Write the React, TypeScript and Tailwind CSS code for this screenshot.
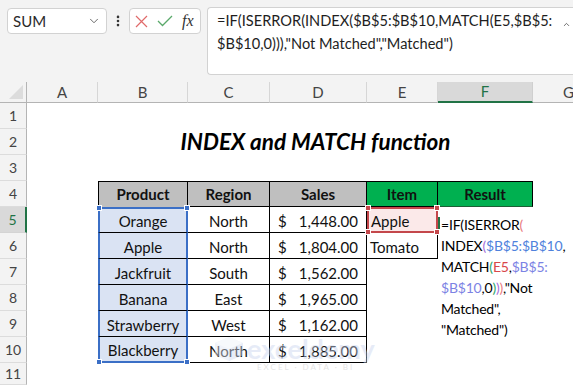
import { ChevronDown, ChevronUp, EllipsisVertical } from 'lucide-react';

const products = [
  ['Orange', 'North', '1,448.00'],
  ['Apple', 'North', '1,804.00'],
  ['Jackfruit', 'South', '1,562.00'],
  ['Banana', 'East', '1,965.00'],
  ['Strawberry', 'West', '1,162.00'],
  ['Blackberry', 'North', '1,885.00'],
];

const letters = ['A', 'B', 'C', 'D', 'E', 'F', 'G'];

function RowHead({ n, active }: { n: number; active?: boolean }) {
  return active ? (
    <div className="flex items-center justify-center bg-[#d9d9d9] border-r-2 border-r-[#217346] border-b border-b-[#d4d4d4] text-[14px] text-[#217346]">
      {n}
    </div>
  ) : (
    <div className="flex items-center justify-center bg-[#f3f3f3] border-r border-r-[#b4b4b4] border-b border-b-[#dcdcdc] text-[14px] text-[#444]">
      {n}
    </div>
  );
}

function Empty() {
  return <div className="bg-white" />;
}

function Handle({ pos, color }: { pos: string; color: string }) {
  return <div className={`absolute w-[6px] h-[6px] border border-white ${color} ${pos}`} />;
}

export default function App() {
  return (
    <div className="w-[573px] h-[385px] overflow-hidden bg-[#f3f3f3] relative font-[family-name:Lato,sans-serif] text-[#111]">
      {/* formula bar */}
      <div className="flex items-start h-[82px] pt-[7px] pl-[7px]">
        <div className="w-[100px] h-[26px] mt-[1px] bg-white border border-[#d2d2d2] rounded-[4px] flex items-center justify-between pl-[5px] pr-[5px]">
          <span className="text-[15px] text-[#2a2a2a]">SUM</span>
          <ChevronDown className="w-[14px] h-[14px] text-[#555]" strokeWidth={1.5} />
        </div>
        <div className="w-[22px] h-[26px] flex items-center justify-center mt-[1px]">
          <EllipsisVertical className="w-[14px] h-[14px] text-[#333]" strokeWidth={2.5} />
        </div>
        <div className="w-[72px] h-[26px] mt-[1px] bg-white border border-[#d2d2d2] rounded-[4px] flex items-center pl-[5px] gap-[9px]">
          <svg width="13" height="13" viewBox="0 0 13 13">
            <path d="M1 1 L12 12 M12 1 L1 12" stroke="#e06a6a" strokeWidth="1.2" fill="none" />
          </svg>
          <svg width="16" height="12" viewBox="0 0 16 12">
            <path d="M1 6 L5.5 10.5 L15 1" stroke="#5aa96a" strokeWidth="1.3" fill="none" />
          </svg>
          <span className="font-[family-name:'Liberation_Serif',serif] italic text-[16px] text-[#333] leading-none">fx</span>
        </div>
        <div className="flex-1 ml-[6px] h-[68px] bg-white border border-r-0 border-[#d2d2d2] rounded-l-[4px] relative pl-[9px] pt-[1px] text-[14.6px] leading-[23px] text-[#1e1e1e] whitespace-nowrap">
          =IF(ISERROR(INDEX($B$5:$B$10,MATCH(E5,$B$5:
          <br />
          $B$10,0))),"Not Matched","Matched")
          <ChevronUp className="absolute right-[2px] top-[12px] w-[9px] h-[9px] text-[#444]" strokeWidth={2} />
        </div>
      </div>

      {/* sheet */}
      <div className="relative grid grid-cols-[27px_71px_90px_82px_97px_71px_95px_40px] grid-rows-[21px_repeat(10,26px)_22px] bg-white">
        {/* title spans B:F */}
        <div className="col-start-3 col-span-5 row-start-3 flex items-center justify-center font-bold italic text-[22.5px] text-black">
          INDEX and MATCH function
        </div>

        {/* formula text overflowing from F5 */}
        <div className="col-start-7 row-start-6 row-span-6 relative pl-[3px] pt-[7px] text-[14px] tracking-[-0.2px] leading-[21px] whitespace-nowrap text-black">
          <div className="absolute left-0 top-[10px] w-[2px] h-[16px] bg-[#217346]" />
          <div>
            =IF(ISERROR<span className="text-[#ea7b82]">(</span>
          </div>
          <div>
            INDEX<span className="text-[#a66fd9]">(</span>
            <span className="text-[#4f82dc]">$B$5:$B$10</span>,
          </div>
          <div>
            MATCH<span className="text-[#2fa56a]">(</span>
            <span className="text-[#d8474a]">E5</span>,<span className="text-[#7c83e4]">$B$5:</span>
          </div>
          <div>
            <span className="text-[#7c83e4]">$B$10</span>,0<span className="text-[#2fa56a]">)</span>
            <span className="text-[#a66fd9]">)</span>
            <span className="text-[#ea7b82]">)</span>,"Not
          </div>
          <div>Matched",</div>
          <div>"Matched")</div>
        </div>

        {/* column headers */}
        <div className="bg-[#f3f3f3] border-r border-r-[#b4b4b4] border-b border-b-[#b4b4b4] flex items-end justify-end p-[3px]">
          <svg width="14" height="14" viewBox="0 0 14 14">
            <path d="M14 0 L14 14 L0 14 Z" fill="#dcdcdc" />
          </svg>
        </div>
        {letters.map((l) =>
          l === 'F' ? (
            <div key={l} className="flex items-center justify-center bg-[#d9d9d9] border-r border-r-[#cfcfcf] border-b-2 border-b-[#217346] text-[15px] text-[#217346]">
              {l}
            </div>
          ) : l === 'G' ? (
            <div key={l} className="flex items-center pl-[30px] bg-[#f3f3f3] border-b border-b-[#b4b4b4] text-[15px] text-[#444]">
              {l}
            </div>
          ) : (
            <div key={l} className="flex items-center justify-center bg-[#f3f3f3] border-r border-r-[#d6d6d6] border-b border-b-[#b4b4b4] text-[15px] text-[#444]">
              {l}
            </div>
          ),
        )}

        {/* row 1 */}
        <RowHead n={1} />
        {letters.map((l) => (
          <Empty key={l} />
        ))}

        {/* row 2 (title placed above) */}
        <RowHead n={2} />
        <Empty />
        <Empty />

        {/* row 3 */}
        <RowHead n={3} />
        {letters.map((l) => (
          <Empty key={l} />
        ))}

        {/* row 4: headers */}
        <RowHead n={4} />
        <Empty />
        <div className="flex items-center justify-center bg-[#bfbfbf] border border-b-0 border-black font-bold text-[15px]">Product</div>
        <div className="flex items-center justify-center bg-[#bfbfbf] border-t border-r border-b border-black font-bold text-[15px]">Region</div>
        <div className="flex items-center justify-center bg-[#bfbfbf] border-t border-r border-b border-black font-bold text-[15px]">Sales</div>
        <div className="flex items-center justify-center bg-[#00b050] border-t border-r border-b border-black font-bold text-[15px]">Item</div>
        <div className="flex items-center justify-center bg-[#00b050] border-t border-r border-b border-t-black border-r-black border-b-[#1d5e35] font-bold text-[15px]">Result</div>
        <Empty />

        {/* rows 5-10 */}
        {products.map(([name, region, sales], i) => {
          const first = i === 0;
          const last = i === products.length - 1;
          return [
            <RowHead key={`h${i}`} n={i + 5} active={first} />,
            <Empty key={`a${i}`} />,
            <div
              key={`b${i}`}
              className={`relative flex items-end justify-center bg-[#dae3f3] border-l-2 border-r-2 border-l-[#3b6fc6] border-r-[#3b6fc6] text-[15px] ${
                first ? 'border-t-2 border-t-[#3b6fc6]' : ''
              } ${last ? 'border-b-2 border-b-[#3b6fc6]' : 'border-b border-b-black'}`}
            >
              {name}
              {first && <Handle pos="-top-[4px] -left-[4px]" color="bg-[#3b6fc6]" />}
              {first && <Handle pos="-top-[4px] -right-[4px]" color="bg-[#3b6fc6]" />}
              {last && <Handle pos="-bottom-[4px] -left-[4px]" color="bg-[#3b6fc6]" />}
              {last && <Handle pos="-bottom-[4px] -right-[4px]" color="bg-[#3b6fc6]" />}
            </div>,
            <div key={`c${i}`} className="flex items-end justify-center border-r border-b border-black text-[15px]">
              {region}
            </div>,
            <div key={`d${i}`} className="flex items-end justify-between pl-[8px] pr-[8px] border-r border-b border-black text-[15px]">
              <span>$</span>
              <span>{sales}</span>
            </div>,
            i === 0 ? (
              <div key={`e${i}`} className="relative flex items-end pl-[2px] bg-[#fbe9e9] border-2 border-[#c4474b] text-[15px] leading-[20px]">
                Apple
                <Handle pos="-top-[4px] -left-[4px]" color="bg-[#c4474b]" />
                <Handle pos="-top-[4px] -right-[4px]" color="bg-[#c4474b]" />
                <Handle pos="-bottom-[4px] -left-[4px]" color="bg-[#c4474b]" />
                <Handle pos="-bottom-[4px] -right-[4px]" color="bg-[#c4474b]" />
              </div>
            ) : i === 1 ? (
              <div key={`e${i}`} className="flex items-end pl-[3px] border-r border-b border-black text-[15px]">
                Tomato
              </div>
            ) : (
              <Empty key={`e${i}`} />
            ),
            <Empty key={`g${i}`} />,
          ];
        })}

        {/* row 11 */}
        <RowHead n={11} />
        {letters.map((l) => (
          <Empty key={l} />
        ))}

        {/* watermark */}
        <div className="absolute left-[213px] top-[253px] flex flex-col items-start opacity-45 pointer-events-none">
          <div className="flex items-center gap-[2px]">
            <svg width="32" height="26" viewBox="0 0 32 26">
              <path d="M16 1 L30 7 L30 19 L16 25 L2 19 L2 7 Z" fill="#dfe6f5" />
              <path d="M16 1 L30 7 L16 13 L2 7 Z" fill="#eef2fa" />
              <path d="M16 13 L30 7 L30 19 L16 25 Z" fill="#cfd9ef" />
            </svg>
            <span className="text-[27px] font-bold text-[#c9d4ee] leading-none">exceldemy</span>
          </div>
          <span className="ml-[44px] mt-[1px] text-[8px] tracking-[2px] text-[#c8c8c8] leading-none">EXCEL · DATA · BI</span>
        </div>
      </div>
    </div>
  );
}
